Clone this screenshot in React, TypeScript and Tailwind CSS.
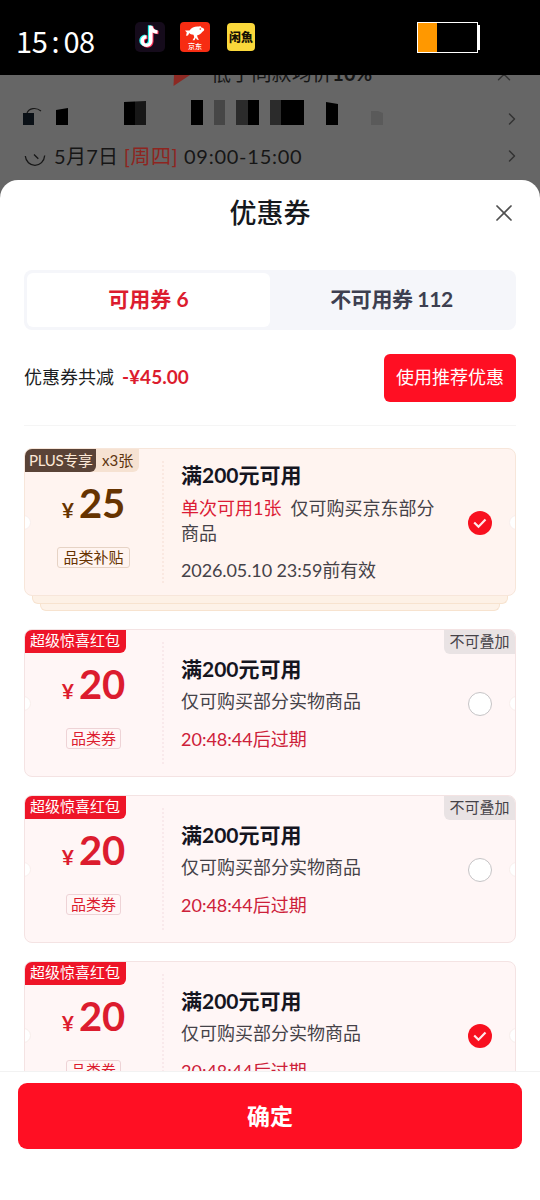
import React, { useState } from 'react';
import { ChevronRight, ChevronUp, X } from 'lucide-react';

interface Coupon {
  id: number;
  amount: number;
  category: string;
  title: string;
  limit?: string;
  scope: string;
  expiry: string;
  plus?: boolean;
  count?: number;
  exclusive?: boolean;
}

const COUPONS: Coupon[] = [
  {
    id: 1,
    amount: 25,
    category: '品类补贴',
    title: '满200元可用',
    limit: '单次可用1张',
    scope: '仅可购买京东部分商品',
    expiry: '2026.05.10 23:59前有效',
    plus: true,
    count: 3,
  },
  { id: 2, amount: 20, category: '品类券', title: '满200元可用', scope: '仅可购买部分实物商品', expiry: '20:48:44后过期', exclusive: true },
  { id: 3, amount: 20, category: '品类券', title: '满200元可用', scope: '仅可购买部分实物商品', expiry: '20:48:44后过期', exclusive: true },
  { id: 4, amount: 20, category: '品类券', title: '满200元可用', scope: '仅可购买部分实物商品', expiry: '20:48:44后过期' },
];

const NOTE_PATH = 'M15.3 3.5v15.3a4.3 4.3 0 1 1-4.3-4.3M15.3 4c.5 3.7 3 5.6 6.7 5.8';

const StatusBar: React.FC = () => (
  <header className="flex h-[75px] items-start bg-black pl-4">
    <div className="mt-[19px] flex w-[119px] font-['Noto_Sans_CJK_SC',sans-serif] text-[29px] leading-[42px] tracking-[-0.4px] text-white">
      15<span className="w-4 text-center">:</span>08
    </div>
    {/* TikTok */}
    <svg className="mt-[22px] h-[30px] w-[30px]" viewBox="0 0 30 30">
      <rect width="30" height="30" rx="5" fill="#150b1b" />
      <g fill="none" strokeWidth="3.5">
        <path d={NOTE_PATH} stroke="#25f4ee" transform="translate(-.7 -.3)" />
        <path d={NOTE_PATH} stroke="#fe2c55" transform="translate(1.5 .8)" />
        <path d={NOTE_PATH} stroke="#fff" transform="translate(.5 .2)" />
      </g>
    </svg>
    {/* JD */}
    <svg className="mt-[22px] ml-[15px] h-[30px] w-[30px]" viewBox="0 0 30 30">
      <rect width="30" height="30" rx="4" fill="#f72c12" />
      <path
        d="M5 8.500l4.500 0C11.500 5.500 15 4 19 4.500l1.500-.5.5 1.200c2 .8 3.300 1.300 3.200 2.600-.1 1.200-1.200 1.500-2 2.200-1.200 2-3.200 3-5.200 3.500l.8 2.500 1.200 1.800h-2l-1.200-2-1.300 2.500h-2l1.800-3-.8-2.500C11.500 12.500 10 12 9.300 11L8 13.500 6 13.800 6.800 10.500z"
        fill="#fff"
      />
      <circle cx="20.300" cy="7" r=".8" fill="#f72c12" />
      <text x="15" y="26.500" textAnchor="middle" fontSize="7" fontWeight="500" fill="#fff" fontFamily="Noto Sans CJK SC, sans-serif">京东</text>
    </svg>
    {/* Xianyu */}
    <div className="mt-[23px] ml-[17px] flex h-[28px] w-[28px] items-center justify-center rounded-[4px] bg-[#fad83b] font-['Noto_Sans_CJK_SC',sans-serif] text-[12px] leading-none font-black text-[#161104]">
      闲魚
    </div>
    <div className="mt-[22px] ml-[162px] flex h-[31px] items-center">
      <div className="h-[31px] w-[61px] border border-white">
        <div className="h-full w-[19px] bg-[#ff9800]" />
      </div>
      <div className="h-[25px] w-[2px] bg-white" />
    </div>
  </header>
);

// Order page left visible behind the sheet
const DimmedPage: React.FC = () => (
  <div className="h-[105px] overflow-hidden text-[#161616]">
    <div className="flex h-[15px] items-end">
      <svg className="ml-[172px] h-[15px] w-[18px]" viewBox="0 0 18 15">
        <path d="M2 0h16L1.500 11z" fill="#8d2923" />
      </svg>
      <div className="mb-[3px] ml-[21px] w-[285px] text-[20px] leading-[28px] tracking-[0.2px]">
        低于同款均价<span className="font-bold">10%</span>
      </div>
      <ChevronUp className="mb-[2px] -ml-[3px] h-[22px] w-[22px] text-[#333]" strokeWidth={1.5} />
    </div>
    <div className="flex h-[47px] items-center">
      <svg className="h-[47px] w-[500px]" viewBox="0 90 500 47">
        <path d="M27 113c2-5 9-6 14-2" fill="none" stroke="#181818" strokeWidth="1.200" />
        <path d="M23 113h11v12H23z" fill="#0a1016" />
        <path d="M56 110l12-2v17H56zM124 102l11-.5V125h-11zM191 100h12v25h-12zM248 100h11v25h-11zM281 100h23v25h-23zM326 102l12 2v21h-12z" fill="#000" />
        <path d="M135 101.500l11-.5v24h-11z" fill="#171717" />
        <path d="M214 100h11v25h-11z" fill="#464646" />
        <path d="M236 100h12v25h-12zM270 100h11v25h-11z" fill="#2b2b2b" />
        <path d="M371 111h7l5 2v12h-12z" fill="#5a5a5a" />
      </svg>
      <ChevronRight className="mt-[10px] ml-[2px] h-[20px] w-[20px] text-[#333]" strokeWidth={1.8} />
    </div>
    <div className="flex h-[38px] items-center">
      <svg className="ml-6 h-[22px] w-[22px]" viewBox="0 0 22 22" fill="none" stroke="#171717" strokeWidth="1.300">
        <path d="M1.300 11C1.800 16.500 6 20.300 11 20.300S20.200 16.500 20.700 10.500M10 9.500l4.300 4.300" />
      </svg>
      <div className="ml-2 w-[456px] text-[20px] whitespace-pre">
        <span className="tracking-[0.3px]">5月7日 </span>
        <span className="tracking-[0.5px] text-[#8e251f]">[周四]</span>
        <span className="tracking-[0.75px]"> 09:00-15:00</span>
      </div>
      <ChevronRight className="-ml-2 h-[20px] w-[20px] text-[#333]" strokeWidth={1.8} />
    </div>
  </div>
);

const CheckMark: React.FC<{ checked: boolean }> = ({ checked }) =>
  checked ? (
    <svg className="h-6 w-6" viewBox="0 0 24 24">
      <circle cx="12" cy="12" r="12" fill="#f8101f" />
      <path d="M6.200 11.500l4.300 4.300 7-7.300" fill="none" stroke="#ffe9ea" strokeWidth="2.200" />
    </svg>
  ) : (
    <span className="block h-6 w-6 rounded-full border-[1.5px] border-[#c6c4c6] bg-white" />
  );

interface CouponCardProps {
  coupon: Coupon;
  checked: boolean;
  onToggle: (id: number) => void;
}

const CouponCard: React.FC<CouponCardProps> = ({ coupon, checked, onToggle }) => {
  const { plus } = coupon;

  return (
    <div className="shrink-0">
      <div
        className={`relative flex h-[148px] overflow-hidden rounded-[8px] border ${
          plus ? 'border-[#f7e6da] bg-[#fff4f0]' : 'border-[#f4e3e3] bg-[#fff6f6]'
        }`}
      >
        {plus ? (
          <div className="absolute -top-px -left-px flex h-6 rounded-br-[6px] bg-[#f6e2d2] text-[15px] leading-6">
            <span className="w-[72px] rounded-br-[6px] bg-[#5a4337] pl-[5px] tracking-[-0.3px] whitespace-nowrap text-[#fde9d7]">PLUS专享</span>
            <span className="w-[43px] pl-[6px] text-[#5e3510]">x{coupon.count}张</span>
          </div>
        ) : (
          <div className="absolute -top-px -left-px h-6 w-[102px] rounded-br-[6px] bg-[#ee1528] pl-[6px] text-[15px] leading-[23px] text-white">
            超级惊喜红包
          </div>
        )}
        {coupon.exclusive && (
          <div className="absolute -top-px -right-px h-[25px] w-[72px] rounded-bl-[6px] bg-[#e9e3e4] pr-px text-center text-[15px] leading-6 text-[#454248]">
            不可叠加
          </div>
        )}
        <span className="absolute top-[66px] -left-[9px] h-[15px] w-[15px] rounded-full border border-[#f8eeec] bg-white" />
        <span className="absolute top-[66px] -right-[9px] h-[15px] w-[15px] rounded-full border border-[#f8eeec] bg-white" />

        <div className={`flex w-[137px] flex-col items-center pt-[34px] ${plus ? 'text-[#663300]' : 'text-[#dc1c2e]'}`}>
          <div className="flex h-10 items-baseline font-bold">
            <span className="mr-[5px] text-[21px] leading-10">¥</span>
            <span className="text-[40px] leading-10">{coupon.amount}</span>
          </div>
          <div
            className={`mt-6 h-[21px] rounded-[3px] border text-[15px] leading-[18px] ${
              plus ? 'border-[#e6d3c5] px-[5px]' : 'border-[#eed3d6] px-1'
            }`}
          >
            {coupon.category}
          </div>
        </div>

        <div className={`my-[12px] border-l-2 border-dotted ${plus ? 'border-[#fae8e1]' : 'border-[#f9e9eb]'}`} />

        <div className={`ml-[17px] w-[262px] text-[18px] text-[#454248] ${plus ? 'pt-[13px]' : 'pt-[26px]'}`}>
          <h3 className="text-[21px] leading-[26px] font-bold text-[#15151f]">{coupon.title}</h3>
          <p className={`leading-[25px] ${plus ? 'mt-2' : 'mt-[7px]'}`}>
            {coupon.limit && <span className="mr-[9px] text-[#dc1c36]">{coupon.limit}</span>}
            {coupon.scope}
          </p>
          <p className={`leading-[26px] ${plus ? 'mt-[11px] tracking-[-0.1px]' : 'mt-3 text-[#cd2039]'}`}>{coupon.expiry}</p>
        </div>

        <button type="button" className="mt-[62px] ml-[25px] h-6 w-6 self-start" onClick={() => onToggle(coupon.id)}>
          <CheckMark checked={checked} />
        </button>
      </div>
      {plus && (
        <>
          <div className="mx-2 h-[8px] rounded-b-[6px] border border-t-0 border-[#f7e3cf] bg-[#fdf1e6]" />
          <div className="mx-4 h-[7px] rounded-b-[6px] border border-t-0 border-[#f7e3cf] bg-[#fdf2e8]" />
        </>
      )}
    </div>
  );
};

export default function App() {
  const [selected, setSelected] = useState<number[]>([1, 4]);

  const handleToggle = (id: number) => {
    setSelected(prev => (prev.includes(id) ? prev.filter(s => s !== id) : [...prev, id]));
  };

  return (
    <div className="h-[1200px] w-[540px] overflow-hidden bg-[#666] font-['Lato','Noto_Sans_CJK_SC',sans-serif]">
      <StatusBar />
      <DimmedPage />

      <section className="flex h-[1020px] flex-col rounded-t-[18px] bg-white">
        <div className="flex h-[66px] shrink-0 items-center">
          <h2 className="ml-[48px] flex-1 text-center text-[27px] font-medium text-[#15181d]">优惠券</h2>
          <button type="button" className="mr-[24px] flex w-[24px] justify-center text-[#505050]">
            <X className="h-[28px] w-[28px] shrink-0" strokeWidth={1.5} />
          </button>
        </div>

        <div className="mx-6 mt-6 flex h-[60px] shrink-0 rounded-[8px] bg-[#f5f6fa] p-[3px] text-[21px] font-bold">
          <button type="button" className="w-[243px] rounded-[6px] bg-white pb-0.5 text-[#dc1c2e]">可用券 6</button>
          <button type="button" className="flex-1 pb-0.5 tracking-[-0.4px] text-[#3d3f50]">不可用券 112</button>
        </div>

        <div className="mx-6 mt-6 flex h-12 shrink-0 items-center text-[18px]">
          <span className="pb-0.5 text-[#1c1d22]">优惠券共减</span>
          <span className="ml-2 flex-1 pb-0.5 text-[19px] font-bold text-[#dc1c2e]">-¥45.00</span>
          <button type="button" className="h-12 w-[132px] rounded-[6px] bg-[#ff0f23] pb-0.5 text-white">使用推荐优惠</button>
        </div>

        <div className="mx-6 mt-[23px] flex min-h-0 flex-1 flex-col gap-[18px] overflow-hidden border-t border-[#f5f5f5] pt-[22px]">
          {COUPONS.map(coupon => (
            <CouponCard
              key={coupon.id}
              coupon={coupon}
              checked={selected.includes(coupon.id)}
              onToggle={handleToggle}
            />
          ))}
        </div>

        <footer className="h-[129px] shrink-0 border-t border-[#f2f2f2] px-[18px] pt-[11px]">
          <button type="button" className="h-[66px] w-full rounded-[9px] bg-[#ff0f23] text-[23px] font-bold text-white">
            确定
          </button>
        </footer>
      </section>
    </div>
  );
}
